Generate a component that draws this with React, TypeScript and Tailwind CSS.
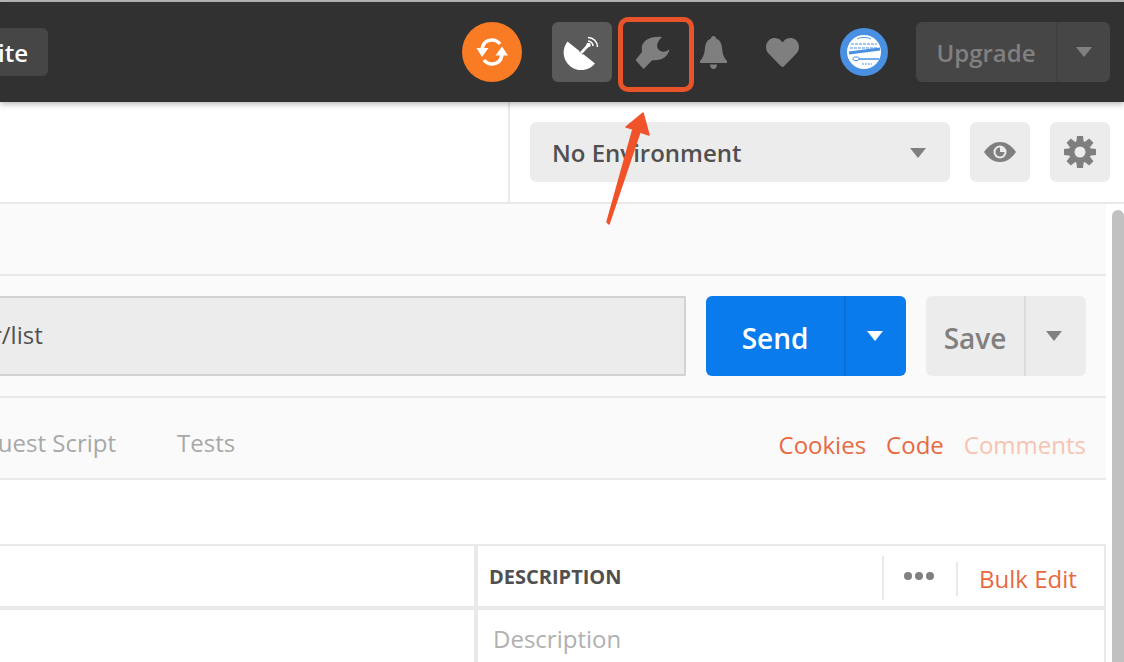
import { FaHeart } from "react-icons/fa";

function Caret({ className }: { className: string }) {
  return <div className={`w-0 h-0 border-x-[8px] border-x-transparent border-t-[10px] ${className}`} />;
}

function SyncIcon() {
  return (
    <svg viewBox="0 0 60 60" className="w-[60px] h-[60px]">
      <circle cx="30" cy="30" r="30" fill="#f97b23" />
      <path d="M20 27C21 21 25 18 30 18C34 18 36 19.5 38 22" fill="none" stroke="#fff" strokeWidth="3.6" />
      <path d="M40 33C39 39 35 42 30 42C26 42 24 40.5 22 38" fill="none" stroke="#fff" strokeWidth="3.6" />
      <path d="M14.5 26H26.5L20 35Z" fill="#fff" />
      <path d="M33.5 33.5H46L40 24.5Z" fill="#fff" />
    </svg>
  );
}

function DishIcon() {
  return (
    <svg viewBox="0 0 60 60" className="w-[60px] h-[60px]">
      <path d="M15.5 19.5A17.5 17.5 0 0 0 43 41.5Z" fill="#fff" />
      <path d="M29 31L36 23.5" stroke="#5a5a5a" strokeWidth="5" fill="none" />
      <path d="M29 31L36 23.5" stroke="#fff" strokeWidth="2.6" fill="none" />
      <circle cx="36.5" cy="23" r="2.2" fill="#fff" />
      <path d="M36 19A5 5 0 0 1 41 24" stroke="#fff" strokeWidth="1.6" fill="none" />
      <path d="M36 15.5A9.5 9.5 0 0 1 45.5 25" stroke="#fff" strokeWidth="1.6" fill="none" />
    </svg>
  );
}

function WrenchIcon() {
  return (
    <svg viewBox="0 0 35 33" className="w-[35px] h-[33px]">
      <path
        d="M27 1C18 0 9 3 7 10C6.5 12 7 14 7 16L0.5 24L8.5 33L17.5 24C25 25 33 22 34.5 13C31 17 24.5 16.5 22.5 12C21.5 8 23.5 4 27 1Z"
        fill="#7f7f7f"
      />
    </svg>
  );
}

function BellIcon() {
  return (
    <svg viewBox="0 0 27 33" className="w-[27px] h-[33px]">
      <path
        d="M13.5 0C15 0 16 1 16 2.5C20 4 21.5 7 22 12C22.5 18 24 22 27 25V27H0V25C3 22 4.5 18 5 12C5.5 7 7 4 11 2.5C11 1 12 0 13.5 0Z"
        fill="#7f7f7f"
      />
      <path d="M10 28.5H17C17 31 15.5 33 13.5 33C11.5 33 10 31 10 28.5Z" fill="#7f7f7f" />
    </svg>
  );
}

function AvatarIcon() {
  return (
    <svg viewBox="0 0 48 48" className="w-12 h-12">
      <circle cx="24" cy="24" r="24" fill="#4a90e2" />
      <circle cx="24" cy="24" r="17" fill="#fff" />
      <path d="M9 25L40 21" stroke="#4a90e2" strokeWidth="3" fill="none" />
      <path d="M11 16H37M10 20H38" stroke="#4a90e2" strokeWidth="1.2" strokeDasharray="3 1" fill="none" />
      <path d="M19 31H39" stroke="#4a90e2" strokeWidth="1.5" fill="none" />
      <rect x="13" y="29" width="6" height="3.5" rx="1.7" fill="#fff" stroke="#4a90e2" strokeWidth="1" />
      <path d="M22 36H32" stroke="#4a90e2" strokeWidth="1" strokeDasharray="2 1" fill="none" />
      <path d="M17 11C21 9 27 9 31 11" stroke="#4a90e2" strokeWidth="1" fill="none" />
    </svg>
  );
}

function EyeIcon() {
  return (
    <svg viewBox="0 0 32 20" className="w-8 h-5">
      <path d="M0 10C5 3 10 0 16 0C22 0 27 3 32 10C27 17 22 20 16 20C10 20 5 17 0 10Z" fill="#7f7f7f" />
      <circle cx="16" cy="10" r="6.5" fill="#ececec" />
      <path d="M16 5.5A4.5 4.5 0 1 0 20.5 10H16Z" fill="#7f7f7f" />
    </svg>
  );
}

function GearIcon() {
  const teeth = [0, 45, 90, 135, 180, 225, 270, 315];
  return (
    <svg viewBox="0 0 32 32" className="w-8 h-8">
      {teeth.map((angle) => (
        <path key={angle} d="M13 0H19L20 8H12Z" fill="#7f7f7f" transform={`rotate(${angle} 16 16)`} />
      ))}
      <circle cx="16" cy="16" r="11" fill="#7f7f7f" />
      <circle cx="16" cy="16" r="5.5" fill="#ececec" />
    </svg>
  );
}

export default function App() {
  return (
    <div className="relative w-[1124px] h-[662px] overflow-hidden bg-white font-['Open_Sans',sans-serif]">
      <div className="h-[2px] bg-[#b9b9b9]" />

      {/* Header */}
      <div className="relative z-10 h-[100px] bg-[#313131] flex items-center justify-between pr-[14px] shadow-[0_2px_6px_rgba(0,0,0,0.3)]">
        <div className="h-12 w-[78px] -ml-[30px] bg-[#464646] rounded-[6px] flex items-center justify-end pr-[20px] pt-[2px] text-[24px] font-semibold text-white whitespace-nowrap overflow-hidden">
          Invite
        </div>
        <div className="flex items-center">
          <SyncIcon />
          <div className="ml-[30px] w-[60px] h-[60px] bg-[#5a5a5a] rounded-[6px]">
            <DishIcon />
          </div>
          <div className="ml-[10px] w-[60px] h-[60px] flex items-center justify-center">
            <WrenchIcon />
          </div>
          <div className="ml-px w-[60px] h-[60px] flex items-center justify-center">
            <BellIcon />
          </div>
          <div className="ml-[9px] w-[60px] h-[60px] flex items-center justify-center">
            <FaHeart className="w-[33px] h-[33px] text-[#7f7f7f]" />
          </div>
          <div className="ml-[28px]">
            <AvatarIcon />
          </div>
          <div className="ml-[28px] w-[194px] h-[60px] bg-[#464646] rounded-[6px] flex items-center">
            <div className="w-[142px] h-full flex items-center justify-center pt-[2px] text-[24px] font-semibold text-[#808080] border-r-2 border-[#414141]">
              Upgrade
            </div>
            <div className="flex-1 flex justify-center">
              <Caret className="border-t-[#808080]" />
            </div>
          </div>
        </div>
      </div>

      {/* Environment row */}
      <div className="h-[102px] flex items-center border-b-2 border-[#e9e9e9]">
        <div className="w-[510px] h-full border-r-2 border-[#e9e9e9]" />
        <div className="ml-[20px] w-[420px] h-[60px] bg-[#ececec] rounded-[6px] flex items-center justify-between pl-[22px] pr-[24px] pt-[2px] text-[24px] font-semibold text-[#505050]">
          No Environment
          <Caret className="border-t-[#808080]" />
        </div>
        <div className="ml-[20px] w-[60px] h-[60px] bg-[#ececec] rounded-[6px] flex items-center justify-center">
          <EyeIcon />
        </div>
        <div className="ml-[20px] w-[60px] h-[60px] bg-[#ececec] rounded-[6px] flex items-center justify-center">
          <GearIcon />
        </div>
      </div>

      <div className="flex">
        <div className="w-[1106px]">
          {/* Tab strip */}
          <div className="h-[72px] bg-[#fafafa] border-b-2 border-[#e9e9e9]" />

          {/* URL row */}
          <div className="h-[122px] bg-[#fafafa] border-b-2 border-[#e9e9e9] flex items-start pt-[20px]">
            <div className="w-[686px] h-[80px] bg-[#ececec] border-y-2 border-r-2 border-[#d2d2d2] rounded-r-[2px] flex items-center text-[24px] text-[#505050] overflow-hidden">
              <span className="-ml-[8px] -translate-y-px">r/list</span>
            </div>
            <div className="ml-[20px] w-[200px] h-[80px] bg-[#097bed] rounded-[6px] flex items-center text-white">
              <div className="w-[140px] h-full flex items-center justify-center pt-[3px] text-[28px] font-semibold border-r-2 border-[#0a6fd4]">
                Send
              </div>
              <div className="flex-1 flex justify-center pr-[3px]">
                <Caret className="border-t-white" />
              </div>
            </div>
            <div className="ml-[20px] w-[160px] h-[80px] bg-[#ececec] rounded-[6px] flex items-center">
              <div className="w-[100px] h-full flex items-center justify-center pt-[3px] text-[28px] font-semibold text-[#808080] border-r-2 border-[#dcdcdc]">
                Save
              </div>
              <div className="flex-1 flex justify-center pr-[4px]">
                <Caret className="border-t-[#808080]" />
              </div>
            </div>
          </div>

          {/* Request tabs */}
          <div className="h-[82px] bg-[#fafafa] border-b-2 border-[#e9e9e9] flex items-center justify-between pt-[12px] pr-[20px] text-[24px]">
            <div className="flex items-center text-[#a8a8a8] -translate-y-[1px]">
              <span className="w-[116px] overflow-hidden whitespace-nowrap flex justify-end">Pre-request Script</span>
              <span className="ml-[61px]">Tests</span>
            </div>
            <div className="flex items-center gap-[20px] text-[#e8693f] translate-y-px">
              <span>Cookies</span>
              <span>Code</span>
              <span className="text-[#f6c4b2]">Comments</span>
            </div>
          </div>

          {/* Params table */}
          <div className="h-[64px]" />
          <div className="border-t-2 border-r-2 border-[#e9e9e9]">
            <div className="h-[60px] flex border-b-4 border-[#e9e9e9] box-content">
              <div className="w-[474px] border-r-4 border-[#e9e9e9] box-content" />
              <div className="flex-1 relative flex items-center pl-[11px] pt-[2px] text-[20px] font-bold text-[#505050]">
                DESCRIPTION
                <div className="absolute left-[404px] top-[10px] w-[2px] h-[44px] bg-[#e9e9e9]" />
                <div className="absolute left-[426px] top-[26px] flex gap-[3px]">
                  <span className="w-[8px] h-[8px] rounded-full bg-[#808080]" />
                  <span className="w-[8px] h-[8px] rounded-full bg-[#808080]" />
                  <span className="w-[8px] h-[8px] rounded-full bg-[#808080]" />
                </div>
                <div className="absolute left-[478px] top-[16px] w-[2px] h-[34px] bg-[#e9e9e9]" />
                <span className="absolute left-[501px] top-[15px] text-[24px] font-normal text-[#e8693f]">Bulk Edit</span>
              </div>
            </div>
            <div className="h-[60px] flex">
              <div className="w-[474px] border-r-4 border-[#e9e9e9] box-content" />
              <div className="flex-1 pl-[15px] pt-[11px] text-[24px] text-[#b0b0b0]">Description</div>
            </div>
          </div>
        </div>

        {/* Scrollbar */}
        <div className="ml-[6px] mt-[6px] w-[12px] h-[600px] bg-[#c1c1c1] rounded-t-[6px]" />
      </div>

      {/* Annotation */}
      <div className="absolute left-[618px] top-[17px] w-[76px] h-[75px] border-[5px] border-[#e9532a] rounded-[10px] z-20" />
      <svg className="absolute left-0 top-0 z-20 pointer-events-none" width="1124" height="662">
        <polygon
          points="607,222 609,224 640,132 649,135 643,113 626,127 633,129"
          fill="#f0532a"
          stroke="#f0532a"
          strokeWidth="1.5"
          strokeLinejoin="round"
        />
      </svg>
    </div>
  );
}
